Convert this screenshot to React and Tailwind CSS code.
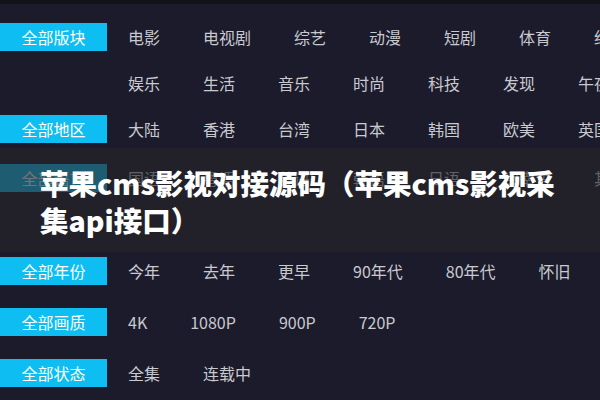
const groups = [
  { label: '全部版块', lines: [['电影', '电视剧', '综艺', '动漫', '短剧', '体育', '纪录片'], ['娱乐', '生活', '音乐', '时尚', '科技', '发现', '午夜']] },
  { label: '全部地区', lines: [['大陆', '香港', '台湾', '日本', '韩国', '欧美', '英国']] },
  { label: '全部语言', lines: [['国语', '粤语', '英语', '韩语', '日语', '闽南语', '其它'], []] },
  { label: '全部年份', lines: [['今年', '去年', '更早', '90年代', '80年代', '怀旧']] },
  { label: '全部画质', lines: [['4K', '1080P', '900P', '720P']] },
  { label: '全部状态', lines: [['全集', '连载中']] },
]

// small vertical nudges so each row sits where the screenshot has it
const rowMargins = ['mt-0', 'mt-0', 'mt-0', 'mt-[3px]', 'mt-0', 'mt-[1px]', 'mt-[5px]', 'mt-[5px]']

function FilterLine({ label, items, mt }) {
  return (
    <div className={`flex h-[46px] items-center ${mt}`}>
      <div className="w-[107px] shrink-0">
        {label && (
          <div className="flex h-[28px] items-center justify-center bg-[#0ebdf1] text-[16px] text-white">{label}</div>
        )}
      </div>
      <div className="ml-[21px] flex shrink-0 flex-nowrap gap-[43px] whitespace-nowrap text-[16px] text-[#c9c9d0]">
        {items.map((it) => (
          <span key={it}>{it}</span>
        ))}
      </div>
    </div>
  )
}

export default function App() {
  let n = 0
  const lines = []
  groups.forEach((g) => {
    g.lines.forEach((items, i) => {
      lines.push(<FilterLine key={n} label={i === 0 ? g.label : null} items={items} mt={rowMargins[n]} />)
      n++
    })
  })

  return (
    <div
      className="relative h-[400px] w-[600px] overflow-hidden bg-[#1c1b2b]"
      style={{ fontFamily: '"Noto Sans CJK SC", "Noto Sans", sans-serif' }}
    >
      <div className="h-[4px] bg-[#12121b]" />
      <div className="pt-[10px]">{lines}</div>

      {/* caption band laid over the picture */}
      <div className="absolute left-0 right-0 top-[148px] h-[104px] bg-[rgba(38,38,40,0.64)] pl-[40px] pr-[30px] pt-[16px]">
        <p className="text-[28.5px] font-black leading-[37px] text-white">
          苹果cms影视对接源码（苹果cms影视采集api接口）
        </p>
      </div>
    </div>
  )
}
